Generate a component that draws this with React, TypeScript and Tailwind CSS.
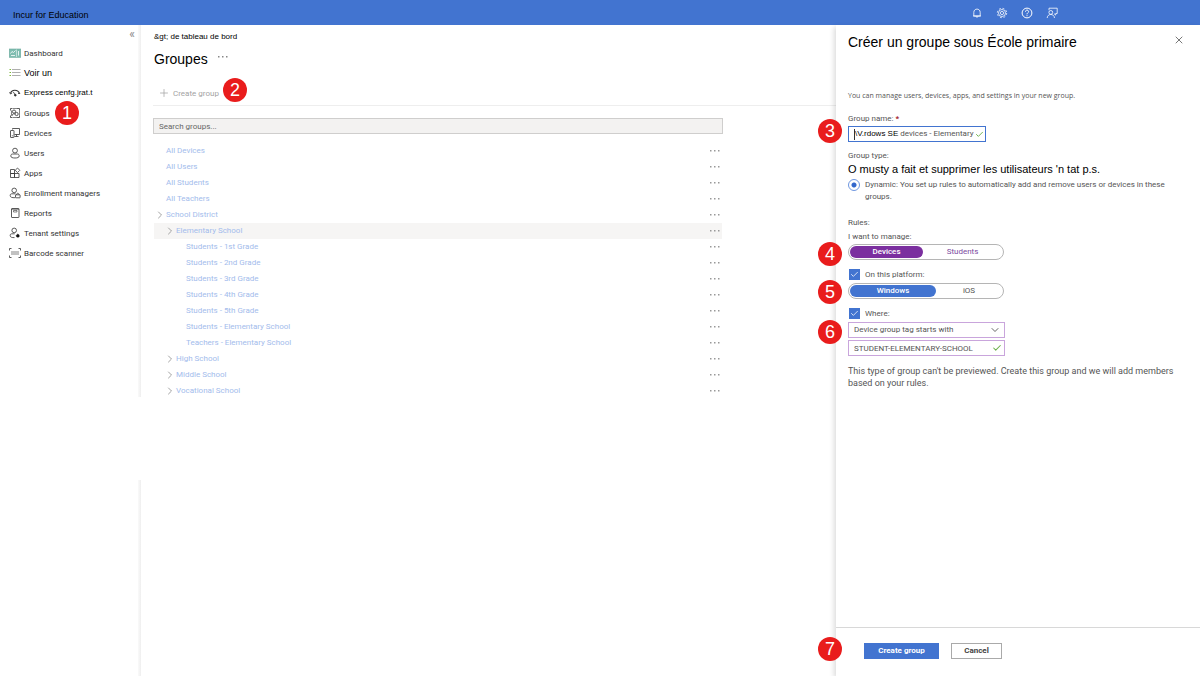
import { useState } from "react";
import type { ReactNode } from "react";
import { Check, ChevronDown, ChevronRight, Plus, X } from "lucide-react";

interface NavItem {
    label: string;
    icon: ReactNode;
    style?: string;
    badge?: number;
}

interface TreeItem {
    label: string;
    level: number;
    expandable?: boolean;
    selected?: boolean;
}

const Icon = ({ children }: { children: ReactNode }) => (
    <svg
        viewBox="0 0 12 12"
        className="w-3 h-3 shrink-0"
        fill="none"
        stroke="currentColor"
        strokeWidth="0.8"
        aria-hidden="true"
    >
        {children}
    </svg>
);

const navItems: NavItem[] = [
    {
        label: "Dashboard",
        icon: (
            <Icon>
                <rect x="0.3" y="2" width="11.4" height="8.3" fill="#7fbcb0" stroke="#6aaa9d" strokeWidth="0.6" />
                <path d="M1.5 6.5 3 4.5l1.5 1L6.500 3.500" stroke="#fff" />
                <path d="M7.500 2.500v7.500" stroke="#fff" strokeWidth="0.5" />
                <path d="M9.500 4v4.600M2 8.500h4" stroke="#fff" />
            </Icon>
        ),
    },
    {
        label: "Voir un",
        style: "font-['Liberation_Sans',sans-serif] text-[9px] text-black",
        icon: (
            <Icon>
                <path d="M0.500 2.500h1.500M0.500 5.500h1.500M0.500 8.500h1.500" stroke="#7fba3c" strokeWidth="1.200" />
                <path d="M3 2.500h8.500M3 5.500h8.500M3 8.500h8.500" stroke="#9a9a9a" />
            </Icon>
        ),
    },
    {
        label: "Express cenfg.jrat.t",
        style: "font-['Liberation_Sans',sans-serif] text-[8px] text-black",
        icon: (
            <Icon>
                <path d="M1.500 6.500C2.500 2.200 9 2 10.500 6.500" strokeWidth="1.100" />
                <path d="M0.500 5.200l1 1.800 1.600-1M4.200 4.800 6.300 8" />
                <circle cx="6.300" cy="8.200" r="0.900" fill="currentColor" />
                <path d="M9 6.500h2.200" />
            </Icon>
        ),
    },
    {
        label: "Groups",
        badge: 1,
        icon: (
            <Icon>
                <path d="M2.500 3.500v5M10.500 3.500v5M4 1.500h5M4 10.500h5" strokeWidth="0.600" />
                <path d="M1.500 3.500v-2h2M8.500 1.500h2v2M10.500 8.500v2h-2M3.500 10.500h-2v-2" />
                <circle cx="5" cy="4.600" r="1.600" />
                <circle cx="7.600" cy="7" r="1.600" />
                <path d="M3 9c0-2 1.500-2.500 2.800-2" />
            </Icon>
        ),
    },
    {
        label: "Devices",
        icon: (
            <Icon>
                <path d="M3.500 2.500v-1h7v6h-5M5.500 9.500h4M7.500 7.500v2" />
                <rect x="1.500" y="3.500" width="3.500" height="7" rx="0.400" />
                <path d="M2.800 8.800h1" />
            </Icon>
        ),
    },
    {
        label: "Users",
        icon: (
            <Icon>
                <circle cx="6" cy="3.600" r="2.400" />
                <path d="M3.600 7h4.800c1.400 0 1.800 1 1.800 2 0 1.500-1.800 2-4.200 2s-4.200-.5-4.200-2c0-1 .4-2 1.800-2z" />
            </Icon>
        ),
    },
    {
        label: "Apps",
        icon: (
            <Icon>
                <path d="M5.500 6.500h-4v-4h4zM1.500 6.500h4v4h-4zM5.500 6.500h4.500v4H5.500zM8.500 1l2.300 2.300-2.300 2.300-2.300-2.300z" />
            </Icon>
        ),
    },
    {
        label: "Enrollment managers",
        icon: (
            <Icon>
                <circle cx="5.200" cy="3.400" r="2.300" />
                <path d="M6 10.700C3 10.800 1.200 10.300 1.200 8.600c0-1.200.5-1.800 1.500-1.800h3.800" />
                <rect x="6.500" y="7.800" width="4.600" height="3" rx="0.300" />
                <path d="M7.500 7.800c0-2 2.600-2 2.600 0" />
            </Icon>
        ),
    },
    {
        label: "Reports",
        icon: (
            <Icon>
                <rect x="2.500" y="1.500" width="7.500" height="9" rx="0.500" />
                <path d="M4.500 3.500h3.500v1.500H4.500zM2.500 2.300h7.500" strokeWidth="0.600" />
            </Icon>
        ),
    },
    {
        label: "Tenant settings",
        icon: (
            <Icon>
                <circle cx="5.200" cy="3.400" r="2.300" />
                <path d="M5.500 10.600C3 10.700 1.200 10.300 1.200 8.600c0-1.200.5-1.800 1.500-1.800h3" />
                <circle cx="8.800" cy="8.800" r="1.500" fill="#111" stroke="#111" strokeDasharray="0.900 0.500" />
            </Icon>
        ),
    },
    {
        label: "Barcode scanner",
        icon: (
            <Icon>
                <path d="M2.500 1.500h-2v2M9.500 1.500h2v2M11.500 8.500v2h-2M2.500 10.500h-2v-2" />
                <path d="M3 4v4M5 4v4M7 4v4M9 4v4" strokeWidth="0.600" />
            </Icon>
        ),
    },
];

const treeItems: TreeItem[] = [
    { label: "All Devices", level: 0 },
    { label: "All Users", level: 0 },
    { label: "All Students", level: 0 },
    { label: "All Teachers", level: 0 },
    { label: "School District", level: 0, expandable: true },
    { label: "Elementary School", level: 1, expandable: true, selected: true },
    { label: "Students - 1st Grade", level: 2 },
    { label: "Students - 2nd Grade", level: 2 },
    { label: "Students - 3rd Grade", level: 2 },
    { label: "Students - 4th Grade", level: 2 },
    { label: "Students - 5th Grade", level: 2 },
    { label: "Students - Elementary School", level: 2 },
    { label: "Teachers - Elementary School", level: 2 },
    { label: "High School", level: 1, expandable: true },
    { label: "Middle School", level: 1, expandable: true },
    { label: "Vocational School", level: 1, expandable: true },
];

const indents = ["pl-[2px]", "pl-3", "pl-[22px]"];

const Badge = ({ value, className }: { value: number; className: string }) => (
    <span
        className={`absolute z-10 flex w-6 h-6 items-center justify-center rounded-full bg-[#e91c1c] font-['Liberation_Sans',sans-serif] text-[18px] leading-none text-white ${className}`}
    >
        {value}
    </span>
);

const Dots = () => (
    <svg viewBox="0 0 10 2" className="w-[10px] h-[2px]" fill="currentColor" aria-hidden="true">
        <rect x="0" width="1.500" height="1.500" />
        <rect x="4" width="1.500" height="1.500" />
        <rect x="8" width="1.500" height="1.500" />
    </svg>
);

const TopBar = () => (
    <header className="flex h-[25px] items-center justify-between bg-[#4274d0] text-white">
        <span className="pt-1 pl-[13px] font-['Liberation_Sans',sans-serif] text-[9px] text-black">
            Incur for Education
        </span>
        <div className="mr-[142px] flex items-center gap-[13px]">
            <button aria-label="Notifications">
                <Icon>
                    <path d="M2.800 9V5.400C2.800 1 9.200 1 9.200 5.400V9zM2 9h8M5 9.300c0 1.300 2 1.300 2 0" />
                </Icon>
            </button>
            <button aria-label="Settings">
                <Icon>
                    <circle cx="6" cy="6" r="1.600" />
                    <circle cx="6" cy="6" r="3.500" />
                    <circle cx="6" cy="6" r="4.700" strokeDasharray="1.900 1.790" />
                </Icon>
            </button>
            <button aria-label="Help">
                <Icon>
                    <circle cx="6" cy="6" r="4.900" strokeWidth="1" />
                    <path d="M4.500 4.700c0-2.200 3.100-2 3.100-.1C7.600 5.900 6 5.800 6 7.300M6 8.200v1" strokeWidth="1" />
                </Icon>
            </button>
            <button aria-label="Feedback">
                <Icon>
                    <path d="M3 3.200V1.200h8.200v5.300H9.700v1.600L8 6.700" />
                    <circle cx="4.800" cy="5.400" r="1.900" />
                    <path d="M1.200 11C1.400 6.300 8.200 6.300 8.500 11" />
                </Icon>
            </button>
        </div>
    </header>
);

const Sidebar = () => (
    <nav className="w-[138px] shrink-0 text-[#333]">
        <div className="flex h-[18px] items-center justify-end pr-[3px]">
            <button aria-label="Collapse menu" className="text-[12px] leading-none text-[#888]">
                «
            </button>
        </div>
        <ul>
            {navItems.map((item) => (
                <li key={item.label} className="flex h-5">
                    <a href="#" className="relative ml-[9px] flex items-center gap-[3px] whitespace-nowrap">
                        {item.icon}
                        <span className={item.style ?? "pt-[2px]"}>{item.label}</span>
                        {item.badge && <Badge value={item.badge} className="left-[46px] -top-[2px]" />}
                    </a>
                </li>
            ))}
        </ul>
    </nav>
);

/* the divider is broken between the two page sections */
const Divider = () => (
    <div className="flex w-[3px] shrink-0 flex-col" aria-hidden="true">
        <div className="h-[372px] bg-linear-to-r from-[#fafafa] to-[#efefef]" />
        <div className="h-[83px]" />
        <div className="flex-1 bg-linear-to-r from-[#fafafa] to-[#efefef]" />
    </div>
);

const Groups = () => (
    <main className="min-w-0 flex-1 pl-3">
        <div className="flex h-6 items-center pl-px font-['Liberation_Sans',sans-serif] text-[8px] text-black">
            &amp;gt; de tableau de bord
        </div>
        <div className="flex h-5 items-center gap-[10px] pl-px">
            <h1 className="font-['Liberation_Sans',sans-serif] text-[14px] text-black">Groupes</h1>
            <button aria-label="More" className="pb-1 text-[#888]">
                <Dots />
            </button>
        </div>
        <div className="mt-3 flex h-[25px] items-center border-b border-[#eeeeee] pl-[5px]">
            <button className="relative flex items-center gap-[3px] text-[#a3a3a3]">
                <Plus className="w-3 h-3" strokeWidth={1.5} />
                <span className="pt-[2px]">Create group</span>
                <Badge value={2} className="left-[65px] -top-[8px]" />
            </button>
        </div>
        <input
            type="text"
            aria-label="Search groups"
            placeholder="Search groups..."
            className="mt-3 mb-[9px] block h-4 w-full max-w-[570px] border border-[#cfcecd] bg-[#f3f2f1] px-[5px] placeholder:text-[#666] outline-none"
        />
        <ul className="ml-px max-w-[568px] text-[#a3bcec]">
            {treeItems.map((item) => (
                <li
                    key={item.label}
                    className={`flex h-4 items-center justify-between pr-[2px] ${indents[item.level]} ${item.selected ? "bg-[#f6f5f4]" : ""}`}
                >
                    <a href="#" className="flex items-center gap-[2px]">
                        <span className="flex w-2 justify-center text-[#999]">
                            {item.expandable && <ChevronRight className="w-3 h-3 shrink-0" strokeWidth={1.8} />}
                        </span>
                        {item.label}
                    </a>
                    <button aria-label={`Options for ${item.label}`} className="text-[#999]">
                        <Dots />
                    </button>
                </li>
            ))}
        </ul>
    </main>
);

interface ToggleProps {
    name: string;
    options: string[];
    initial: string;
    activeClass: string;
    idleClass: string;
    widthClass: string;
}

const Toggle = ({ name, options, initial, activeClass, idleClass, widthClass }: ToggleProps) => {
    const [active, setActive] = useState(initial);

    return (
        <div
            role="group"
            aria-label={name}
            className="flex h-4 w-[156px] rounded-full border border-[#b5b5b5] p-px"
        >
            {options.map((option, index) => (
                <button
                    key={option}
                    aria-pressed={active === option}
                    onClick={() => setActive(option)}
                    type="button"
                    className={`rounded-full leading-none ${index === 0 ? widthClass : "flex-1"} ${active === option ? activeClass : idleClass}`}
                >
                    {option}
                </button>
            ))}
        </div>
    );
};

const CheckField = ({ id, label }: { id: string; label: string }) => (
    <div className="relative flex h-[23px] items-center gap-[5px] pl-px">
        <input
            id={id}
            type="checkbox"
            defaultChecked
            className="peer h-[11px] w-[11px] appearance-none border border-[#4274d0] checked:bg-[#4274d0]"
        />
        <Check className="pointer-events-none absolute left-[2px] w-[9px] h-[9px] text-white opacity-0 peer-checked:opacity-100" strokeWidth={2} />
        <label htmlFor={id}>{label}</label>
    </div>
);

const CreatePanel = () => (
    <aside className="relative flex w-[364px] shrink-0 flex-col bg-white text-[#555] shadow-[-2px_2px_5px_rgba(0,0,0,0.14)]">
        <form className="flex-1 px-3">
            <div className="flex h-[34px] items-center justify-between pr-[3px]">
                <h2 className="font-['Liberation_Sans',sans-serif] text-[14px] text-black">
                    Créer un groupe sous École primaire
                </h2>
                <button type="button" aria-label="Close" className="mb-1 text-[#777]">
                    <X className="w-3 h-3" strokeWidth={2} />
                </button>
            </div>
            <p className="mt-[31px] font-['Open_Sans',sans-serif] text-[7px] leading-[12px]">
                You can manage users, devices, apps, and settings in your new group.
            </p>

            <label htmlFor="group-name" className="mt-[11px] block leading-[12px]">
                Group name: <span className="font-bold text-[#a4262c]">*</span>
            </label>
            <div className="relative mt-px w-[138px]">
                <div className="flex h-4 items-center border border-[#4274d0] pr-px pl-[5px]">
                    <span className="h-[11px] border-l border-[#333]" />
                    <span className="font-['Liberation_Sans',sans-serif] text-[8px] whitespace-nowrap text-black">\V.rdows SE</span>
                    <input
                        id="group-name"
                        type="text"
                        defaultValue="devices - Elementary"
                        className="ml-[2px] h-3 min-w-0 flex-1 outline-none"
                    />
                    <Check className="w-[9px] h-[9px] shrink-0 text-[#6bb04a]" strokeWidth={2.5} />
                </div>
                <Badge value={3} className="-left-[30px] -top-[7px]" />
            </div>

            <fieldset className="mt-2">
                <legend className="leading-[12px]">Group type:</legend>
                <p className="font-['Liberation_Sans',sans-serif] text-[11px] leading-[15px] whitespace-nowrap text-black">
                    O musty a fait et supprimer les utilisateurs &#39;n tat p.s.
                </p>
                <div className="mt-[2px] flex items-start gap-[5px]">
                    <input
                        id="dynamic"
                        type="radio"
                        name="group-type"
                        defaultChecked
                        className="h-3 w-3 shrink-0 appearance-none rounded-full border border-[#6f97e0] bg-white checked:bg-[radial-gradient(circle,#3267cb_0_2px,#fff_3px)]"
                    />
                    <label htmlFor="dynamic" className="leading-[12px]">
                        Dynamic: You set up rules to automatically add and remove users or devices in these groups.
                    </label>
                </div>
            </fieldset>

            <h3 className="mt-[14px] leading-[12px]">Rules:</h3>
            <p className="mt-[2px] leading-[12px]">I want to manage:</p>
            <div className="relative mt-px">
                <Toggle
                    name="I want to manage"
                    options={["Devices", "Students"]}
                    initial="Devices"
                    widthClass="w-[73px]"
                    activeClass="bg-[#7b2f9f] text-white font-medium"
                    idleClass="text-[#7b4aa0]"
                />
                <Badge value={4} className="-left-[30px] -top-[2px]" />
            </div>
            <div className="mt-[3px]">
                <CheckField id="platform" label="On this platform:" />
            </div>
            <div className="relative -mt-[3px]">
                <Toggle
                    name="Platform"
                    options={["Windows", "iOS"]}
                    initial="Windows"
                    widthClass="w-[86px]"
                    activeClass="bg-[#4274d0] text-white font-medium"
                    idleClass="text-[#555]"
                />
                <Badge value={5} className="-left-[30px] -top-[3px]" />
            </div>
            <div className="mt-[3px]">
                <CheckField id="where" label="Where:" />
            </div>
            <div className="relative -mt-[3px] w-[157px]">
                <div className="relative">
                    <select
                        aria-label="Rule"
                        className="block h-4 w-full appearance-none border border-[#c9a5dc] bg-white pl-[5px] outline-none"
                    >
                        <option>Device group tag starts with</option>
                    </select>
                    <ChevronDown className="pointer-events-none absolute right-1 top-[2px] w-3 h-3" strokeWidth={1.8} />
                </div>
                <div className="relative mt-[2px]">
                    <input
                        type="text"
                        aria-label="Device group tag"
                        defaultValue="STUDENT-ELEMENTARY-SCHOOL"
                        className="block h-4 w-full border border-[#c9a5dc] bg-white pr-4 pl-[5px] outline-none"
                    />
                    <Check className="pointer-events-none absolute right-[3px] top-[3px] w-[10px] h-[10px] text-[#6bb04a]" strokeWidth={2.5} />
                </div>
                <Badge value={6} className="-left-[30px] -top-[2px]" />
            </div>
            <p className="mt-[9px] text-[9px] leading-[12px]">
                This type of group can&#39;t be previewed. Create this group and we will add members based on your rules.
            </p>
        </form>

        <footer className="relative flex h-[49px] items-center gap-3 border-t border-[#d8d8d8] pb-[2px] pl-7">
            <Badge value={7} className="-left-[18px] top-[9px]" />
            <button className="h-4 w-[75px] bg-[#4274d0] font-bold leading-none text-white">Create group</button>
            <button className="h-4 w-[51px] border border-[#aaa] font-bold leading-none text-[#444]">Cancel</button>
        </footer>
    </aside>
);

export default function App() {
    return (
        <div className="flex min-h-screen flex-col bg-white font-['Roboto',sans-serif] text-[8px] leading-[12px]">
            <TopBar />
            <div className="flex flex-1">
                <Sidebar />
                <Divider />
                <Groups />
                <CreatePanel />
            </div>
        </div>
    );
}
